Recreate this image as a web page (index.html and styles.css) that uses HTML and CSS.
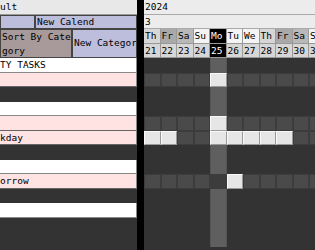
FILE: index.html
```html
<!DOCTYPE html>
<html lang="en">
<head>
  <meta charset="UTF-8">
  <title>Task Calendar</title>
  <link rel="stylesheet" href="styles.css">
</head>
<body>
  <div class="app">
    <div class="side">
      <div class="cal-name">ult</div>
      <div class="btn-row">
        <button class="btn lav stub"></button>
        <button class="btn lav">New Calend</button>
      </div>
      <div class="btn-row tall">
        <button class="btn sort">Sort By Category</button>
        <button class="btn lav">New Category</button>
      </div>
      <div class="list">
        <div class="row cat">TY TASKS</div>
        <div class="row task"></div>
        <div class="row gap"></div>
        <div class="row cat"></div>
        <div class="row task"></div>
        <div class="row task">kday</div>
        <div class="row gap"></div>
        <div class="row cat"></div>
        <div class="row task">orrow</div>
        <div class="row gap"></div>
        <div class="row cat"></div>
      </div>
    </div>

    <div class="cal">
      <div class="hdr">2024</div>
      <div class="hdr">3</div>
      <div class="days">
        <span class="d thu">Th</span>
        <span class="d fri">Fr</span>
        <span class="d sat">Sa</span>
        <span class="d">Su</span>
        <span class="d today">Mo</span>
        <span class="d">Tu</span>
        <span class="d">We</span>
        <span class="d thu">Th</span>
        <span class="d fri">Fr</span>
        <span class="d sat">Sa</span>
        <span class="d">Su</span>
      </div>
      <div class="days dates">
        <span class="d">21</span>
        <span class="d">22</span>
        <span class="d">23</span>
        <span class="d">24</span>
        <span class="d today">25</span>
        <span class="d">26</span>
        <span class="d">27</span>
        <span class="d">28</span>
        <span class="d">29</span>
        <span class="d">30</span>
        <span class="d">31</span>
      </div>
      <div class="grid" id="grid"></div>
    </div>
  </div>

  <script>
    // one entry per list row: null = empty band, otherwise marks per day
    const rows = [
      null,
      '....x......',
      null,
      null,
      '....x......',
      'xx..xxxxx..',
      null,
      null,
      '....ox.....',
      null,
      null,
      null,
      null
    ];

    const grid = document.getElementById('grid');
    rows.forEach(marks => {
      const row = document.createElement('div');
      row.className = marks ? 'g-row g-task' : 'g-row g-band';
      for (let i = 0; i < 11; i++) {
        const cell = document.createElement('span');
        cell.className = 'g-cell';
        if (i === 4) cell.classList.add('today');
        if (marks && marks[i] === 'x') cell.classList.add('on');
        if (marks && marks[i] === 'o') cell.classList.add('off');
        row.appendChild(cell);
      }
      grid.appendChild(row);
    });
  </script>
</body>
</html>
```

FILE: styles.css
```css
body {
  margin: 0;
  background-color: #333;
  font-family: "DejaVu Sans Mono", monospace;
  font-size: 9.5px;
  color: #000;
}

.app {
  display: flex;
  height: 250px;
  overflow: hidden;
}

/* left side: calendar + task list */
.side {
  width: 137px;
  flex-shrink: 0;
  overflow: hidden;
  background-color: #333;
}

.cal-name {
  height: 14.5px;
  line-height: 13.5px;
  box-sizing: border-box;
  background-color: #e8e8e8;
  border-bottom: 1px solid #999;
  white-space: nowrap;
}

.btn-row {
  display: flex;
  height: 14.5px;
}

.btn-row.tall {
  height: 29px;
}

.btn {
  font: inherit;
  margin: 0;
  padding: 0 0 0 1px;
  text-align: left;
  vertical-align: top;
  white-space: nowrap;
  overflow: hidden;
  box-sizing: border-box;
  border: 1px solid #444;
  line-height: 12.5px;
  display: block;
  height: 100%;
}

.btn.lav {
  background-color: #bdbddc;
  flex: 1;
  min-width: 0;
}

.btn.stub {
  flex: 0 0 35px;
}

.btn.sort {
  background-color: #a89a9a;
  width: 72px;
  flex-shrink: 0;
  white-space: normal;
  word-break: break-all;
  line-height: 13.5px;
}

.row {
  height: 14.5px;
  line-height: 13.5px;
  box-sizing: border-box;
  white-space: nowrap;
  border-right: 1px solid #888;
}

.row.cat {
  background-color: #fff;
  border-bottom: 1px solid #888;
}

.row.task {
  background-color: #ffe2e2;
  border-bottom: 1px solid #666;
}

.row.gap {
  background-color: #333;
  border-right: none;
}

/* right side: month grid */
.cal {
  flex: 1;
  min-width: 0;
  overflow: hidden;
  border-left: 7px solid #000;
}

.hdr {
  height: 14.5px;
  line-height: 13.5px;
  box-sizing: border-box;
  background-color: #ececec;
  border-bottom: 1px solid #aaa;
  padding-left: 1px;
}

.days {
  display: flex;
  height: 14.5px;
}

.d {
  flex: 0 0 16.5px;
  box-sizing: border-box;
  border: 1px solid #999;
  border-width: 0 1px 1px 0;
  background-color: #f4f4f4;
  line-height: 13.5px;
  padding-left: 1px;
}

.d.thu {
  background-color: #d6d6d6;
}

.d.fri {
  background-color: #a9a9a9;
}

.d.sat {
  background-color: #b8b8b8;
}

.dates .d {
  background-color: #d6d6d6;
}

.d.today,
.dates .d.today {
  background-color: #000;
  color: #fff;
}

.g-row {
  display: flex;
  height: 14.5px;
}

.g-cell {
  flex: 0 0 16.5px;
  box-sizing: border-box;
}

.g-band .g-cell.today {
  background-color: #5f5f5f;
  border-left: 1px solid #555;
  border-right: 1px solid #555;
}

.g-task .g-cell {
  background-color: #4a4a4a;
  border: 1px solid #3c3c3c;
}

.g-task .g-cell.on {
  background-color: #e6e6e6;
  border-color: #f8f8f8 #999 #999 #f8f8f8;
}

.g-task .g-cell.off {
  background-color: #3c3c3c;
}
```
